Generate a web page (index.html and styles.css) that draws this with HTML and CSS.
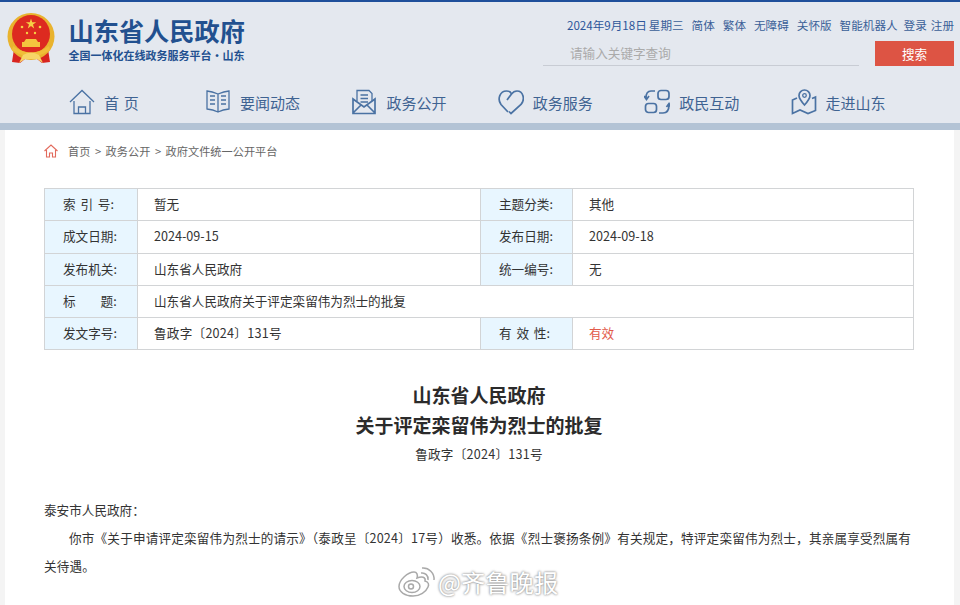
FILE: index.html
```html
<!DOCTYPE html>
<html lang="zh-CN">
<head>
<meta charset="utf-8">
<title>山东省人民政府</title>
<link rel="stylesheet" href="styles.css">
</head>
<body>
<header class="site-header">
  <div class="header-top">
    <a class="brand">
      <svg class="emblem" viewBox="0 0 50 52" aria-hidden="true">
        <path d="M8 36 L6 49 L14 50 L19 46 H31 L36 50 L44 49 L42 36Z" fill="#d8241f"/>
        <circle cx="25" cy="23.500" r="23.500" fill="#e9b32e"/>
        <circle cx="25" cy="21" r="19" fill="#dd2a20"/>
        <path d="M25 5.500 L26.200 9.300 L30.200 9.300 L27 11.600 L28.200 15.400 L25 13.100 L21.800 15.400 L23 11.600 L19.800 9.300 L23.800 9.300Z" fill="#f6cf45"/>
        <circle cx="16" cy="14" r="1.300" fill="#f6cf45"/>
        <circle cx="34" cy="14" r="1.300" fill="#f6cf45"/>
        <circle cx="21" cy="20" r="1.200" fill="#f6cf45"/>
        <circle cx="29" cy="20" r="1.200" fill="#f6cf45"/>
        <path d="M20 26 H30 L32 29 H18Z M16 29 H34 V34 H16Z" fill="#f4c53e"/>
        <path d="M7 33 Q25 46 43 33 L44 37 Q25 50 6 37Z" fill="#f0bf38"/>
        <path d="M17 42 Q25 37 33 42 L37 50 L31 46 H19 L13 50Z" fill="#f7d667"/>
      </svg>
      <div class="brand-text">
        <div class="brand-name">山东省人民政府</div>
        <div class="brand-sub">全国一体化在线政务服务平台·山东</div>
      </div>
    </a>
    <div class="tools">
      <div class="links">
        <span class="date">2024年9月18日</span>
        <span class="week">星期三</span>
        <a>简体</a><a>繁体</a><a>无障碍</a><a>关怀版</a><a>智能机器人</a>
        <span class="auth"><a>登录</a><a>注册</a></span>
      </div>
      <div class="search">
        <div class="search-input">请输入关键字查询</div>
        <button class="search-btn" type="button">搜索</button>
      </div>
    </div>
  </div>
  <nav class="nav">
    <a class="nav-item nav-home">
      <svg class="nav-icon" viewBox="0 0 26 26"><path d="M1 13 L13 1.500 L25 13 M5 12 V24.500 H21 V12 M9.500 24 V18 H16.500 V24"/></svg>
      <span class="wide">首 页</span>
    </a>
    <a class="nav-item">
      <svg class="nav-icon" viewBox="0 0 26 26"><path d="M13 5 Q7 2.500 2 2 V20 Q8 20.500 13 23 Q18 20.500 24 20 V2 Q19 2.500 13 5Z M13 5 V23 M5 7 H10 M5 11 H10 M5 15 H10 M16 7 H21 M16 11 H21 M16 15 H21"/></svg>
      <span>要闻动态</span>
    </a>
    <a class="nav-item">
      <svg class="nav-icon" viewBox="0 0 26 26"><path d="M6 12 V1.500 H18 L21 4.500 V12 M9.500 6 H17 M9.500 9.500 H17 M9.500 13 H17"/><path class="thick" d="M2 10 V24.500 H24 V10 L13 18Z M2 24 L10 16 M24 24 L16 16"/></svg>
      <span>政务公开</span>
    </a>
    <a class="nav-item">
      <svg class="nav-icon" viewBox="0 0 26 26"><path class="thick" d="M10 23 L3 15.500 C-1 10 2 2 8.500 2 C11 2 13 3.500 13.500 5 L9 11 M13.500 5 C15 3 17 2 19 2 C25 2 27.500 10 23 15.500 L13 24.500 L11 22.500"/></svg>
      <span>政务服务</span>
    </a>
    <a class="nav-item">
      <svg class="nav-icon" viewBox="0 0 26 26"><rect class="thick" x="14" y="1.500" width="11" height="9" rx="3"/><rect class="thick" x="1.500" y="14.500" width="11" height="9" rx="3"/><path class="thick" d="M11 2 H7 Q2 2 2 9 M0 7 L2.500 10.500 L5 7 M15 24 H19 Q25 24 25 16 M22.500 18 L25 14.500 L27 18"/></svg>
      <span>政民互动</span>
    </a>
    <a class="nav-item">
      <svg class="nav-icon" viewBox="0 0 26 26"><path class="thick" d="M13.500 16 C9 11 8 9 8 6.500 A5.500 5.500 0 0 1 19 6.500 C19 9 18 11 13.500 16Z"/><circle cx="13.500" cy="6.500" r="1.800"/><path class="thick" d="M6 9 L1.500 11 V24.500 L9 21 L17 24.500 L24.500 21.500 V8 L21 9.500"/></svg>
      <span>走进山东</span>
    </a>
  </nav>
</header>
<div class="band"></div>
<main class="page">
  <div class="crumbs">
    <svg class="crumb-icon" viewBox="0 0 14 14"><path d="M0.500 7 L7 1 L13.500 7 M2.500 6 V13 H5.500 V9 H8.500 V13 H11.500 V6"/></svg>
    <span>首页</span><span class="sep">&gt;</span><span>政务公开</span><span class="sep">&gt;</span><span>政府文件统一公开平台</span>
  </div>
  <table class="meta">
    <colgroup><col class="c-label"><col class="c-val"><col class="c-label2"><col></colgroup>
    <tr>
      <th>索 引 号:</th><td>暂无</td>
      <th>主题分类:</th><td>其他</td>
    </tr>
    <tr>
      <th>成文日期:</th><td>2024-09-15</td>
      <th>发布日期:</th><td>2024-09-18</td>
    </tr>
    <tr>
      <th>发布机关:</th><td>山东省人民政府</td>
      <th>统一编号:</th><td>无</td>
    </tr>
    <tr>
      <th>标<span class="gap"></span>题:</th><td colspan="3">山东省人民政府关于评定栾留伟为烈士的批复</td>
    </tr>
    <tr>
      <th>发文字号:</th><td class="ref-no">鲁政字〔2024〕131号</td>
      <th>有 效 性:</th><td class="valid">有效</td>
    </tr>
  </table>
  <article class="doc">
    <h1 class="doc-title">山东省人民政府<br>关于评定栾留伟为烈士的批复</h1>
    <div class="doc-no ref-no">鲁政字〔2024〕131号</div>
    <p class="addressee">泰安市人民政府：</p>
    <p class="body-text">你市《关于申请评定栾留伟为烈士的请示》（泰政呈〔2024〕17号）收悉。依据《烈士褒扬条例》有关规定，特评定栾留伟为烈士，其亲属享受烈属有关待遇。</p>
  </article>
</main>
<div class="mark">
  <svg class="mark-icon" viewBox="0 0 38 32"><path d="M15 30 C7 30 1 26 1 20.500 C1 14 10 6 16 6 C19 6 20 9 19 12 C24 10 28 11 27 15 C31 16 31 19 30 21 C28 26 22 30 15 30Z"/><ellipse cx="14" cy="20.500" rx="8" ry="6"/><circle cx="13" cy="20.500" r="2.500"/><path d="M23 7 A6 6 0 0 1 30 14 M24 2 A11 11 0 0 1 36 14"/></svg>
  <span>@齐鲁晚报</span>
</div>
</body>
</html>
```
FILE: styles.css
```css
* { box-sizing: border-box; }
html, body { margin: 0; height: 605px; overflow: hidden; }
body {
  position: relative;
  background: #f4f4f4;
  color: #333;
  font-family: "Noto Sans CJK SC", "Noto Sans", sans-serif;
}
.site-header {
  height: 123px;
  background: #e4e8ef;
  border-top: 2px solid #1f4f9b;
}
.header-top { display: flex; justify-content: space-between; height: 77px; }
.brand { display: flex; align-items: flex-start; padding: 11px 0 0 6px; }
.emblem { width: 50px; height: 52px; }
.brand-text { margin-left: 12.500px; padding-top: 2px; color: #22508f; font-weight: 700; }
.brand-name { font-size: 25.200px; line-height: 30px; }
.brand-sub { font-size: 11px; line-height: 18px; margin-top: 1px; }
.tools { width: 387px; margin-right: 6px; }
.links {
  display: flex;
  align-items: center;
  height: 19px;
  margin-top: 13px;
  font-size: 11.600px;
  color: #3a5f98;
  white-space: nowrap;
}
.links a { margin-left: 8px; }
.date { width: 84px; color: #2d569a; }
.week { width: 35px; }
.auth { display: flex; }
.auth a { margin-left: 4px; }
.auth a:first-child { margin-left: 6px; }
.search { display: flex; justify-content: space-between; margin-top: 7px; margin-left: -24px; }
.search-input {
  width: 316px;
  height: 25px;
  padding-left: 27px;
  border-bottom: 1px solid #c8ccd4;
  font-size: 12.600px;
  line-height: 24px;
  color: #aaa;
}
.search-btn {
  width: 79px;
  height: 25px;
  padding: 0;
  border: 0;
  background: #dd5444;
  color: #fff;
  font: inherit;
  font-size: 12.600px;
}
.nav { display: flex; padding-left: 69px; }
.nav-item {
  display: flex;
  align-items: center;
  gap: 9px;
  width: 146.400px;
  height: 46px;
  font-size: 15px;
  color: #3f6392;
}
.nav-home { width: 136px; }
.nav-icon { width: 26px; height: 26px; flex: none; fill: none; stroke: #4a72a3; stroke-width: 1.300; }
.nav-icon .thick { stroke-width: 1.700; }
.wide { letter-spacing: 0.500px; word-spacing: 0.500px; }
.band { height: 7px; background: #b3c3d5; }
.page {
  margin: 0 6px 0 5px;
  height: 475px;
  padding: 0 40px 0 39px;
  background: #fff;
}
.crumbs {
  display: flex;
  align-items: center;
  height: 41px;
  font-size: 11.200px;
  color: #666;
}
.crumb-icon { width: 14px; height: 14px; margin-right: 10px; fill: none; stroke: #e26a5c; stroke-width: 1.100; }
.sep { margin: 0 4.500px; }
.meta {
  width: 870px;
  margin-top: 17px;
  table-layout: fixed;
  border-collapse: collapse;
  font-size: 12.600px;
  color: #333;
}
.c-label { width: 93px; }
.c-val { width: 343px; }
.c-label2 { width: 92px; }
.meta th, .meta td {
  height: 32.300px;
  padding: 0 0 2px;
  border: 1px solid #d2d4d6;
  font-weight: 400;
  white-space: nowrap;
}
.meta th { background: #e8f6ff; padding-left: 18px; text-align: left; word-spacing: 2px; }
.meta td { padding-left: 16px; }
.gap { display: inline-block; width: 25px; }
.meta .valid { color: #e25b4a; }
.ref-no { letter-spacing: 0.250px; }
.doc { font-size: 12.600px; color: #333; }
.doc-title {
  margin: 30px 0 0;
  font-size: 19px;
  line-height: 30px;
  font-weight: 700;
  text-align: center;
  color: #2b2b2b;
}
.doc-no { margin-top: 0; line-height: 28px; text-align: center; }
.addressee { margin: 28px 0 0; line-height: 28px; }
.body-text { margin: 0; line-height: 28px; text-indent: 25px; letter-spacing: 0.190px; }
.mark {
  position: absolute;
  left: 398px;
  top: 566px;
  display: flex;
  align-items: center;
  gap: 2px;
  font-size: 24.300px;
  line-height: 32px;
  color: #fff;
  text-shadow: 0 0 2px #8a8a8a, 0 0 3px #a8a8a8;
}
.mark-icon { width: 38px; height: 32px; fill: #fff; stroke: #a9a9a9; stroke-width: 1.500; }
```
